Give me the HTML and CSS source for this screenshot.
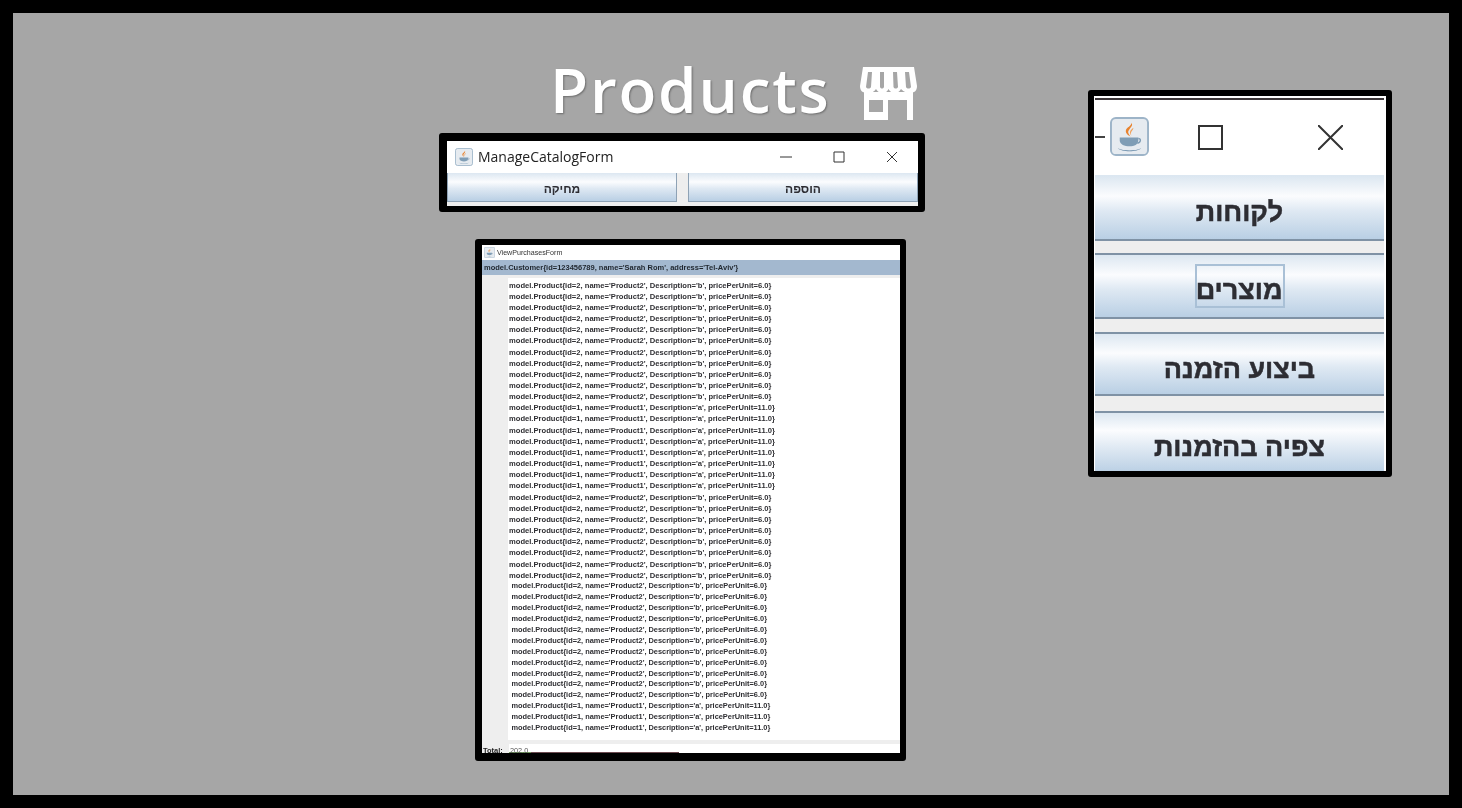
FILE: index.html
```html
<!DOCTYPE html>
<html lang="en">
<head>
    <meta charset="UTF-8">
    <title>Products</title>
    <link rel="stylesheet" href="styles.css">
</head>
<body>
    <svg class="defs" width="0" height="0">
        <symbol id="javaIcon" viewBox="0 0 40 40">
            <rect x="1" y="1" width="38" height="38" rx="5" fill="#e6ebf0" stroke="#9db4c8" stroke-width="2"/>
            <path d="M22 6c3 4-5 7-3 11 1 2 2 3 2 3-4-2-6-5-4-8 2-2 5-3 5-6z" fill="#e8822e"/>
            <path d="M24 11c0 3-4 4-2 8-3-3-1-6 2-8z" fill="#f0a25c"/>
            <path d="M10 21h19v3c0 4-4 6-9 6s-10-2-10-6z" fill="#7f9db5"/>
            <path d="M29 22c3 0 3 4-1 5" fill="none" stroke="#7f9db5" stroke-width="1.5"/>
            <path d="M8 32c6 3 18 3 24 0-4 4-20 4-24 0z" fill="#5f84a3"/>
        </symbol>
    </svg>

    <main class="slide">
        <header class="title">
            <h1>Products</h1>
            <svg class="store-icon" viewBox="0 0 57 53">
                <path fill-rule="evenodd" d="M3 0H54L57 19C57 24 54 26 50 26 47 26 44 25 41 22 39 25 37 26 35 26 33 26 30 25 28.500 22 27 25 25 26 22 26 20 26 18 25 16 22 14 25 11 26 7 26 3 26 0 24 0 19ZM8 5 6 20C7 22 10 22 11 20L12 5ZM20 5V20C21 22 23 22 24 20V5ZM33 5 33.500 20C34.500 22 37 22 38 20L37 5ZM45 5 46 20C47 22 50 22 51 20L49 5Z" fill="#fff"/>
                <path fill-rule="evenodd" d="M4 25H53V53H47V33H28V53H4ZM9 33V45H23V33Z" fill="#fff"/>
            </svg>
        </header>

        <section class="window manage-window">
            <div class="titlebar">
                <svg class="java-icon"><use href="#javaIcon"/></svg>
                <span class="window-name">ManageCatalogForm</span>
                <div class="window-controls">
                    <svg viewBox="0 0 12 12"><path d="M0 6H12" stroke="#333" fill="none"/></svg>
                    <svg viewBox="0 0 12 12"><path d="M1 1H11V11H1Z" stroke="#333" fill="none"/></svg>
                    <svg viewBox="0 0 12 12"><path d="M1 1 11 11M11 1 1 11" stroke="#333" fill="none"/></svg>
                </div>
            </div>
            <div class="manage-buttons">
                <button class="java-btn" lang="he" dir="rtl">מחיקה</button>
                <button class="java-btn" lang="he" dir="rtl">הוספה</button>
            </div>
        </section>

        <section class="window purchases-window">
            <div class="titlebar">
                <svg class="java-icon"><use href="#javaIcon"/></svg>
                <span class="window-name">ViewPurchasesForm</span>
            </div>
            <div class="customer-bar">model.Customer{id=123456789, name='Sarah Rom', address='Tel-Aviv'}</div>
            <div class="purchases-body">
                <div class="purchases-list">
                    <ul class="rows rows-first">
                        <li>model.Product{id=2, name='Product2', Description='b', pricePerUnit=6.0}</li>
                        <li>model.Product{id=2, name='Product2', Description='b', pricePerUnit=6.0}</li>
                        <li>model.Product{id=2, name='Product2', Description='b', pricePerUnit=6.0}</li>
                        <li>model.Product{id=2, name='Product2', Description='b', pricePerUnit=6.0}</li>
                        <li>model.Product{id=2, name='Product2', Description='b', pricePerUnit=6.0}</li>
                        <li>model.Product{id=2, name='Product2', Description='b', pricePerUnit=6.0}</li>
                        <li>model.Product{id=2, name='Product2', Description='b', pricePerUnit=6.0}</li>
                        <li>model.Product{id=2, name='Product2', Description='b', pricePerUnit=6.0}</li>
                        <li>model.Product{id=2, name='Product2', Description='b', pricePerUnit=6.0}</li>
                        <li>model.Product{id=2, name='Product2', Description='b', pricePerUnit=6.0}</li>
                        <li>model.Product{id=2, name='Product2', Description='b', pricePerUnit=6.0}</li>
                        <li>model.Product{id=1, name='Product1', Description='a', pricePerUnit=11.0}</li>
                        <li>model.Product{id=1, name='Product1', Description='a', pricePerUnit=11.0}</li>
                        <li>model.Product{id=1, name='Product1', Description='a', pricePerUnit=11.0}</li>
                        <li>model.Product{id=1, name='Product1', Description='a', pricePerUnit=11.0}</li>
                        <li>model.Product{id=1, name='Product1', Description='a', pricePerUnit=11.0}</li>
                        <li>model.Product{id=1, name='Product1', Description='a', pricePerUnit=11.0}</li>
                        <li>model.Product{id=1, name='Product1', Description='a', pricePerUnit=11.0}</li>
                        <li>model.Product{id=1, name='Product1', Description='a', pricePerUnit=11.0}</li>
                        <li>model.Product{id=2, name='Product2', Description='b', pricePerUnit=6.0}</li>
                        <li>model.Product{id=2, name='Product2', Description='b', pricePerUnit=6.0}</li>
                        <li>model.Product{id=2, name='Product2', Description='b', pricePerUnit=6.0}</li>
                        <li>model.Product{id=2, name='Product2', Description='b', pricePerUnit=6.0}</li>
                        <li>model.Product{id=2, name='Product2', Description='b', pricePerUnit=6.0}</li>
                        <li>model.Product{id=2, name='Product2', Description='b', pricePerUnit=6.0}</li>
                        <li>model.Product{id=2, name='Product2', Description='b', pricePerUnit=6.0}</li>
                        <li>model.Product{id=2, name='Product2', Description='b', pricePerUnit=6.0}</li>
                    </ul>
                    <ul class="rows rows-second">
                        <li>model.Product{id=2, name='Product2', Description='b', pricePerUnit=6.0}</li>
                        <li>model.Product{id=2, name='Product2', Description='b', pricePerUnit=6.0}</li>
                        <li>model.Product{id=2, name='Product2', Description='b', pricePerUnit=6.0}</li>
                        <li>model.Product{id=2, name='Product2', Description='b', pricePerUnit=6.0}</li>
                        <li>model.Product{id=2, name='Product2', Description='b', pricePerUnit=6.0}</li>
                        <li>model.Product{id=2, name='Product2', Description='b', pricePerUnit=6.0}</li>
                        <li>model.Product{id=2, name='Product2', Description='b', pricePerUnit=6.0}</li>
                        <li>model.Product{id=2, name='Product2', Description='b', pricePerUnit=6.0}</li>
                        <li>model.Product{id=2, name='Product2', Description='b', pricePerUnit=6.0}</li>
                        <li>model.Product{id=2, name='Product2', Description='b', pricePerUnit=6.0}</li>
                        <li>model.Product{id=2, name='Product2', Description='b', pricePerUnit=6.0}</li>
                        <li>model.Product{id=1, name='Product1', Description='a', pricePerUnit=11.0}</li>
                        <li>model.Product{id=1, name='Product1', Description='a', pricePerUnit=11.0}</li>
                        <li>model.Product{id=1, name='Product1', Description='a', pricePerUnit=11.0}</li>
                    </ul>
                </div>
            </div>
            <div class="total-row">
                <span class="total-label">Total:</span>
                <span class="total-value">202.0</span>
            </div>
        </section>

        <section class="window menu-window">
            <div class="menu-top">
                <span class="menu-dash"></span>
                <svg class="java-icon"><use href="#javaIcon"/></svg>
                <svg class="menu-max" viewBox="0 0 25 25"><path d="M1 1H24V24H1Z" stroke="#333" stroke-width="2" fill="none"/></svg>
                <svg class="menu-close" viewBox="0 0 25 25"><path d="M0 0 25 25M25 0 0 25" stroke="#333" stroke-width="2" fill="none"/></svg>
            </div>
            <div class="menu-buttons">
                <button class="java-btn menu-btn" lang="he" dir="rtl">לקוחות</button>
                <button class="java-btn menu-btn menu-btn-focus" lang="he" dir="rtl"><span class="focus-box">מוצרים</span></button>
                <button class="java-btn menu-btn menu-btn-short" lang="he" dir="rtl">ביצוע הזמנה</button>
                <button class="java-btn menu-btn menu-btn-cut" lang="he" dir="rtl">צפיה בהזמנות</button>
            </div>
        </section>
    </main>
</body>
</html>
```

FILE: styles.css
```css
body {
    margin: 0;
    background-color: #000;
    font-family: "Liberation Sans", Arial, sans-serif;
}

.defs {
    position: absolute;
}

.slide {
    position: relative;
    box-sizing: border-box;
    width: 1462px;
    height: 808px;
    border: 13px solid #000;
    background-color: #a6a6a6;
    overflow: hidden;
}

/* the slide is a free canvas, its pieces are placed by hand */
.title {
    position: absolute;
    left: 537px;
    top: 38px;
    display: flex;
    align-items: flex-start;
    gap: 25px;
}

.title h1 {
    width: 285px;
    margin: 0;
    font-family: "Open Sans", sans-serif;
    font-weight: 600;
    font-size: 62px;
    line-height: 76px;
    letter-spacing: 1.8px;
    color: #fff;
    text-shadow: 1px 1px 2px rgba(0,0,0,0.35);
    white-space: nowrap;
}

.store-icon {
    width: 57px;
    height: 53px;
    margin-top: 16px;
}

.window {
    position: absolute;
    box-sizing: border-box;
    display: flex;
    flex-direction: column;
    background-color: #eee;
    border-style: solid;
    border-color: #000;
    border-radius: 3px;
    overflow: hidden;
}

/* the reference is a scaled screenshot, so its contents are a bit soft */
.window > * {
    filter: blur(0.35px);
}

.titlebar {
    display: flex;
    align-items: center;
    background-color: #fff;
}

.java-btn {
    display: block;
    margin: 0;
    padding: 0;
    border: none;
    font-family: "Liberation Sans", Arial, sans-serif;
    font-weight: bold;
    color: #2d2d33;
    background: linear-gradient(#dce7f1 0%, #fbfcfe 32%, #dfe9f3 55%, #b9cfe4 100%);
}

/* ManageCatalogForm */
.manage-window {
    left: 426px;
    top: 120px;
    width: 486px;
    height: 79px;
    border-width: 8px 7px 6px 8px;
}

.manage-window .titlebar {
    height: 32px;
    flex: none;
}

.manage-window .java-icon {
    width: 18px;
    height: 18px;
    margin-left: 8px;
}

.manage-window .window-name {
    margin-left: 5px;
    margin-bottom: 2px;
    font-family: "Open Sans", sans-serif;
    font-size: 14px;
    color: #222;
}

.window-controls {
    display: flex;
    gap: 41px;
    margin-left: auto;
    margin-right: 20px;
}

.window-controls svg {
    width: 12px;
    height: 12px;
}

.manage-buttons {
    display: grid;
    grid-template-columns: 230px 230px;
    gap: 11px;
}

.manage-buttons .java-btn {
    box-sizing: border-box;
    height: 29px;
    padding-top: 4px;
    border: 1px solid #8ea2b5;
    border-top: none;
    font-size: 12px;
}

/* ViewPurchasesForm */
.purchases-window {
    left: 462px;
    top: 226px;
    width: 431px;
    height: 522px;
    border-width: 6px 6px 8px 7px;
}

.purchases-window .titlebar {
    height: 15px;
    flex: none;
}

.purchases-window .java-icon {
    width: 11px;
    height: 11px;
    margin-left: 2px;
}

.purchases-window .window-name {
    margin-left: 2px;
    font-size: 7.1px;
    color: #333;
}

.customer-bar {
    flex: none;
    height: 15px;
    padding-left: 2px;
    background-color: #a3b8cf;
    font-size: 7.5px;
    font-weight: bold;
    line-height: 15px;
    color: #1f262e;
    white-space: nowrap;
}

.purchases-body {
    flex: 1;
    padding: 3px 0 4px 26px;
    min-height: 0;
}

.purchases-list {
    height: 100%;
    box-sizing: border-box;
    padding: 1.6px 0 0 1px;
    background-color: #fff;
    overflow: hidden;
}

.rows {
    margin: 0;
    padding: 0;
    list-style: none;
    font-weight: bold;
    color: #2f2f33;
    white-space: nowrap;
}

.rows-first {
    font-size: 7.6px;
    line-height: 11.15px;
}

.rows-second {
    margin-top: 0.5px;
    padding-left: 2.5px;
    font-size: 7.4px;
    line-height: 10.9px;
}

.total-row {
    flex: none;
    display: flex;
    height: 9px;
}

.total-label {
    width: 26px;
    padding-left: 1px;
    font-size: 7.5px;
    font-weight: bold;
    line-height: 13px;
    color: #222;
    text-decoration: underline;
}

.total-value {
    flex: 1;
    padding-left: 1px;
    background: linear-gradient(to right, #6f9a5a 0 22px, #6b4a50 22px 170px, #fff 170px) bottom / 100% 1px no-repeat, #fff;
    font-size: 7.3px;
    line-height: 13px;
    color: #555;
    overflow: hidden;
}

/* main menu window, zoomed in */
.menu-window {
    left: 1075px;
    top: 77px;
    width: 304px;
    height: 387px;
    border-width: 6px;
    background-color: #fff;
}

.menu-top {
    flex: none;
    height: 77px;
    display: flex;
    align-items: flex-start;
    box-sizing: border-box;
    margin: 2px 2px 0 1px;
    border-top: 2px solid #3c3638;
}

.menu-dash {
    width: 10px;
    height: 2px;
    margin-top: 36px;
    background-color: #444;
}

.menu-top .java-icon {
    width: 41px;
    height: 39px;
    margin-left: 4px;
    margin-top: 17px;
}

.menu-max,
.menu-close {
    width: 25px;
    height: 25px;
    margin-top: 25px;
}

.menu-max {
    margin-left: 48px;
}

.menu-close {
    margin-left: 95px;
}

.menu-buttons {
    display: flex;
    flex-direction: column;
    gap: 12px;
    margin: 0 2px 0 1px;
    background-color: #eee;
}

.menu-btn {
    flex: none;
    box-sizing: border-box;
    height: 66px;
    padding-top: 10px;
    font-size: 27px;
    -webkit-text-stroke: 0.5px #2d2d33;
    border-top: 1px solid #dce7f1;
    border-bottom: 2px solid #7f92a5;
}

.menu-btn + .menu-btn {
    border-top: 2px solid #7f92a5;
}

.menu-btn-focus {
    padding-top: 6px;
}

.menu-btn-short {
    height: 64px;
    margin: 1px 0 3px;
}

.menu-btn-cut {
    height: 60px;
    border-bottom: none;
    background: linear-gradient(#dce7f1 0%, #fbfcfe 30%, #dfe9f3 60%, #bcd1e5 100%);
}

.menu-btn .focus-box {
    display: inline-block;
    box-sizing: border-box;
    width: 90px;
    height: 44px;
    border: 2px solid #a9c0d6;
    line-height: 48px;
    overflow: hidden;
}
```
